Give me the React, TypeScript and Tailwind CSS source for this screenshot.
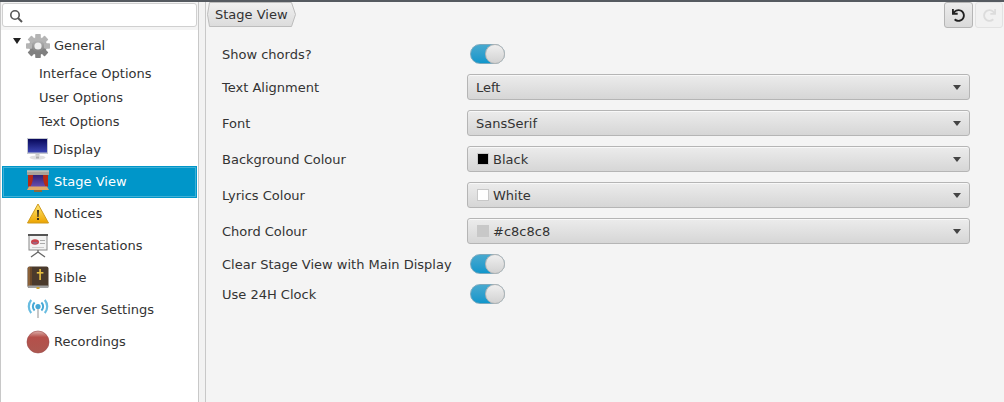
import React from "react";
import { FaUndo, FaRedo } from "react-icons/fa";

const font = "font-['DejaVu_Sans',sans-serif]";

function Gear() {
  return (
    <svg width="26" height="26" viewBox="0 0 26 26">
      <defs>
        <linearGradient id="gear" x1="0" y1="0" x2="0" y2="1">
          <stop offset="0" stopColor="#c4c4c4" />
          <stop offset="1" stopColor="#727272" />
        </linearGradient>
      </defs>
      <g fill="url(#gear)">
        <circle cx="13" cy="13" r="9" />
      </g>
      {[0, 45, 90, 135, 180, 225, 270, 315].map((a) => (
        <rect key={a} x="10.2" y="1" width="5.6" height="6" rx="0.8" fill={a > 90 && a < 270 ? "#808080" : "#b4b4b4"} transform={`rotate(${a} 13 13)`} />
      ))}
      <circle cx="13" cy="13" r="3.6" fill="#f0f0f0" />
    </svg>
  );
}

function Monitor() {
  return (
    <svg width="24" height="26" viewBox="0 0 24 26">
      <defs>
        <linearGradient id="screen" x1="0" y1="0" x2="0" y2="1">
          <stop offset="0" stopColor="#08085a" />
          <stop offset="1" stopColor="#3c46b4" />
        </linearGradient>
      </defs>
      <rect x="1" y="1" width="21" height="16" fill="#c4c8d0" />
      <rect x="2" y="2" width="19" height="13.5" fill="url(#screen)" />
      <rect x="9.5" y="17" width="4" height="2" fill="#c8c8c8" />
      <ellipse cx="11.5" cy="20.5" rx="8" ry="2" fill="#e0e0e0" />
      <rect x="10" y="19.5" width="3" height="2" fill="#b0b0b0" />
    </svg>
  );
}

function Curtain() {
  return (
    <svg width="24" height="26" viewBox="0 0 24 26">
      <defs>
        <linearGradient id="stage" x1="0" y1="0" x2="0" y2="1">
          <stop offset="0" stopColor="#2a1c70" />
          <stop offset="1" stopColor="#6a50b0" />
        </linearGradient>
      </defs>
      <rect x="2" y="5" width="20" height="13" fill="url(#stage)" />
      <path d="M1 1.5h22v4.5H1z" fill="#a8a29a" />
      <path d="M1 1.5h22v1H1z" fill="#d8d4cc" />
      <path d="M2 6h5c0 5-.6 8-2.5 11.5H2z" fill="#b82a14" />
      <path d="M22 6h-5c0 5 .6 8 2.5 11.5H22z" fill="#b82a14" />
      <path d="M3 17.5h18l2 3.5H1z" fill="#e0a868" />
      <rect x="8" y="21" width="8" height="2" fill="#8a6a40" />
    </svg>
  );
}

function Warning() {
  return (
    <svg width="24" height="24" viewBox="0 0 24 24">
      <defs>
        <linearGradient id="warn" x1="0" y1="0" x2="0" y2="1">
          <stop offset="0" stopColor="#ffe976" />
          <stop offset="1" stopColor="#eda400" />
        </linearGradient>
      </defs>
      <path d="M12 2L22.5 21H1.5z" fill="url(#warn)" stroke="#cf9a1c" strokeLinejoin="round" />
      <path d="M11 8h2l-.4 7h-1.2z" fill="#3a3020" />
      <rect x="11" y="16" width="2" height="2" fill="#3a3020" />
    </svg>
  );
}

function Presentation() {
  return (
    <svg width="24" height="26" viewBox="0 0 24 26">
      <rect x="3" y="2" width="18" height="15" fill="#f2f2f2" stroke="#888" />
      <rect x="2" y="1" width="20" height="2" fill="#555" />
      <ellipse cx="9" cy="9" rx="4" ry="2.8" fill="#c8404a" />
      <path d="M6 9.5a3.5 2 0 0 0 6 0z" fill="#7488b4" />
      <rect x="14" y="7" width="5" height="1" fill="#aaa" />
      <rect x="14" y="10" width="5" height="1" fill="#aaa" />
      <rect x="6" y="14" width="12" height="1" fill="#ccc" />
      <path d="M12 17v3M12 19l-7 5M12 19l7 5" stroke="#666" strokeWidth="1.3" fill="none" />
    </svg>
  );
}

function BibleBook() {
  return (
    <svg width="22" height="24" viewBox="0 0 22 24">
      <rect x="0.5" y="0.5" width="21" height="21.5" rx="2" fill="#4a3a2c" />
      <rect x="1" y="1" width="2" height="19" fill="#8a6038" />
      <rect x="3" y="1" width="2" height="19" fill="#6a4828" />
      <rect x="1" y="19.5" width="20.5" height="2.5" rx="1" fill="#a0a0a0" />
      <rect x="12.3" y="3" width="1.6" height="11" fill="#e8c040" />
      <rect x="9.8" y="6" width="6.6" height="1.6" fill="#e8c040" />
      <rect x="9.5" y="21" width="3" height="2" fill="#c9a030" />
    </svg>
  );
}

function Signal() {
  return (
    <svg width="22" height="24" viewBox="0 0 22 24" fill="none">
      <rect x="10" y="11" width="2" height="9" fill="#c8c8c8" />
      <circle cx="11" cy="8.5" r="2.6" fill="#45a8d6" />
      <path d="M7.6 12.5a5.5 5.5 0 0 1 0-8M14.4 4.5a5.5 5.5 0 0 1 0 8" stroke="#45a8d6" strokeWidth="2" />
      <path d="M4.2 15a10 10 0 0 1 0-13M17.8 2a10 10 0 0 1 0 13" stroke="#68bce0" strokeWidth="2.2" />
    </svg>
  );
}

function RecordDot() {
  return (
    <svg width="24" height="24" viewBox="0 0 24 24">
      <defs>
        <linearGradient id="rec" x1="0" y1="0" x2="0" y2="1">
          <stop offset="0" stopColor="#dcb0aa" />
          <stop offset="0.28" stopColor="#b5504a" />
          <stop offset="1" stopColor="#ac5850" />
        </linearGradient>
      </defs>
      <circle cx="12" cy="12" r="11" fill="url(#rec)" stroke="#944" strokeWidth="0.6" />
    </svg>
  );
}

function Toggle() {
  return (
    <div className="ml-[3px] flex h-5 w-[35px] items-center justify-end rounded-full border border-[#7aa8bd] bg-gradient-to-b from-[#46a9cf] to-[#0d96cb]">
      <div className="h-5 w-5 -mr-px rounded-full border border-[#b5b5b5] bg-gradient-to-b from-[#efefef] to-[#d2d2d2]" />
    </div>
  );
}

function Combo({ text, swatch }: { text: string; swatch?: string }) {
  return (
    <div className="flex h-[26px] w-[503px] items-center rounded-[3px] border border-[#b5b5b5] bg-gradient-to-b from-[#ececec] to-[#d6d6d6] pl-[8px] pr-[8px] shadow-[inset_0_1px_0_#f8f8f8]">
      {swatch ? (
        <span className="ml-px mr-[4px] h-3 w-3 border border-[#c8c8c8]" style={{ background: swatch }} />
      ) : null}
      <span className="flex-1 leading-none">{text}</span>
      <span className="h-0 w-0 border-x-[4px] border-t-[5px] border-x-transparent border-t-[#444]" />
    </div>
  );
}

function Row({ label, children }: { label: string; children: React.ReactNode }) {
  return (
    <div className="flex items-center">
      <div className="h-5 w-[245px] leading-[22px]">{label}</div>
      {children}
    </div>
  );
}

function IconRow({
  icon,
  label,
  selected,
  tight,
}: {
  icon: React.ReactNode;
  label: string;
  selected?: boolean;
  tight?: boolean;
}) {
  const iconCol = tight ? "flex w-[51px] justify-end pr-[2px]" : "flex w-[52px] justify-end pr-[3px]";
  return (
    <div
      className={
        selected
          ? "mx-px flex h-8 items-center border border-[#0096c9] bg-[#0096c9] text-white shadow-[inset_0_0_0_1px_#ffffff40]"
          : "flex h-8 items-center border border-transparent"
      }
    >
      <div className={selected ? "flex w-[51px] justify-end pr-[3px]" : iconCol}>
        <div className="flex w-[26px] justify-center">{icon}</div>
      </div>
      <span>{label}</span>
    </div>
  );
}

export default function App() {
  return (
    <div className={`${font} flex h-[402px] w-[1004px] flex-col overflow-hidden bg-[#f4f4f4] text-[13px] text-[#333]`}>
      <div className="h-0.5 bg-[#555a60]" />
      <div className="flex min-h-0 flex-1">
        {/* left tree */}
        <div className="w-[199px] border-x border-x-[#c8c8c8] bg-white">
          <div className="bg-[#f4f4f4] px-px pb-[3px] pt-px">
            <div className="flex h-6 items-center rounded-[3px] border border-[#d0d0d0] bg-white pl-[6px]">
              <svg className="mt-px" width="14" height="14" viewBox="0 0 14 14" fill="none" stroke="#555" strokeWidth="1.6">
                <circle cx="6" cy="6" r="4.2" />
                <path d="M9 9l4 4" strokeWidth="2" />
              </svg>
            </div>
          </div>
          <div className="relative bg-white">
            <span className="absolute left-[12px] top-[8px] h-0 w-0 border-x-[4px] border-t-[6px] border-x-transparent border-t-[#222]" />
            <IconRow icon={<Gear />} label="General" />
            <div className="pl-[38px]">
              <div className="flex h-6 items-center">Interface Options</div>
              <div className="flex h-6 items-center">User Options</div>
              <div className="flex h-6 items-center">Text Options</div>
            </div>
            <IconRow icon={<Monitor />} label="Display" tight />
            <IconRow icon={<Curtain />} label="Stage View" selected />
            <IconRow icon={<Warning />} label="Notices" />
            <IconRow icon={<Presentation />} label="Presentations" />
            <IconRow icon={<BibleBook />} label="Bible" />
            <IconRow icon={<Signal />} label="Server Settings" />
            <IconRow icon={<RecordDot />} label="Recordings" />
          </div>
        </div>
        <div className="w-[7px] border-r border-r-[#c8c8c8] bg-[#f2f2f2]" />
        {/* right panel */}
        <div className="flex-1 pl-[16px]">
          <div className="-ml-[15px] flex h-[26px] items-start justify-between pr-px">
            <div className="relative flex h-[25px] w-[90px] items-center pl-[8px]">
              <svg className="absolute inset-0" width="90" height="25" viewBox="0 0 90 25">
                <defs>
                  <linearGradient id="crumb" x1="0" y1="0" x2="0" y2="1">
                    <stop offset="0" stopColor="#f0f0f0" />
                    <stop offset="1" stopColor="#dcdcdc" />
                  </linearGradient>
                </defs>
                <path d="M2.5.5H84.5L88.5 12.5 84.5 24.5H2.5L.5 12.5z" fill="url(#crumb)" stroke="#bdbdbd" />
              </svg>
              <span className="relative">Stage View</span>
            </div>
            <div className="flex gap-[2px]">
              <div className="flex h-[26px] w-[29px] items-center justify-center rounded-[3px] border border-[#b5b5b5] bg-gradient-to-b from-[#ececec] to-[#dadada]">
                <FaUndo size={13} color="#222" />
              </div>
              <div className="flex h-[26px] w-[28px] items-center justify-center rounded-[3px] border border-[#e2e2e2] bg-[#f1f1f1]">
                <FaRedo size={13} color="#dcdcdc" />
              </div>
            </div>
          </div>
          <div className="mt-[16px] flex flex-col gap-[10px]">
            <Row label="Show chords?"><Toggle /></Row>
            <Row label="Text Alignment"><Combo text="Left" /></Row>
            <Row label="Font"><Combo text="SansSerif" /></Row>
            <Row label="Background Colour"><Combo text="Black" swatch="#000000" /></Row>
            <Row label="Lyrics Colour"><Combo text="White" swatch="#ffffff" /></Row>
            <Row label="Chord Colour"><Combo text="#c8c8c8" swatch="#c8c8c8" /></Row>
            <Row label="Clear Stage View with Main Display"><Toggle /></Row>
            <Row label="Use 24H Clock"><Toggle /></Row>
          </div>
        </div>
      </div>
    </div>
  );
}
